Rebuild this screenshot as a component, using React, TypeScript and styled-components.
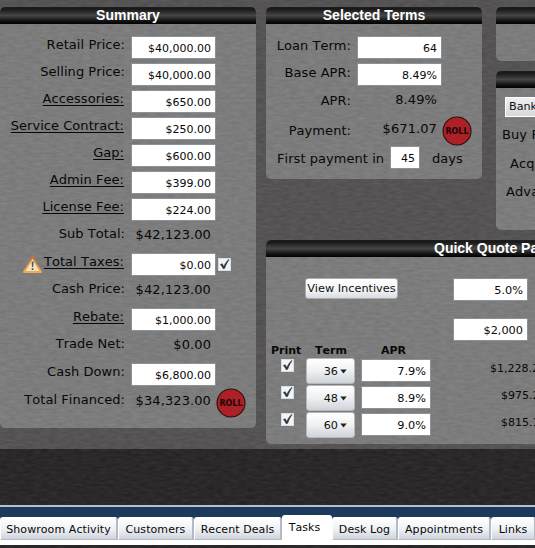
import React from 'react';
import styled, { createGlobalStyle, css } from 'styled-components';

const texture = `url("data:image/svg+xml,${encodeURIComponent(
  '<svg xmlns="http://www.w3.org/2000/svg" width="256" height="256"><filter id="g" x="0" y="0" width="100%" height="100%" color-interpolation-filters="sRGB"><feTurbulence type="fractalNoise" baseFrequency="0.12 0.4" numOctaves="2" seed="8" stitchTiles="stitch"/><feColorMatrix values="1.6 0 0 0 -0.3  1.6 0 0 0 -0.3  1.6 0 0 0 -0.3  0 0 0 0 0.05"/></filter><rect width="256" height="256" filter="url(#g)"/></svg>'
)}")`;

const GlobalStyle = createGlobalStyle`
  body { margin: 0; overflow: hidden; background: #2b2929; }
  * { box-sizing: border-box; }
`;

const Page = styled.div`
  width: 535px;
  height: 548px;
  overflow: hidden;
  display: flex;
  flex-direction: column;
  background: ${texture}, #262424;
  font-family: 'DejaVu Sans', Verdana, sans-serif;
  font-size: 13px;
  font-kerning: none;
  line-height: 16px;
  color: #080808;
  white-space: nowrap;
`;

const Workspace = styled.div`
  height: 449px;
  flex: none;
  padding-top: 7px;
  display: flex;
  gap: 10px;
  background: ${texture}, #545152;
`;

const RightSide = styled.div`
  display: flex;
  flex-direction: column;
  width: 420px;
  flex: none;
`;

const TopPanels = styled.div`
  display: flex;
  gap: 14px;
  height: 233px;
`;

const SideStack = styled.div`
  display: flex;
  flex-direction: column;
  gap: 10px;
`;

const PanelBox = styled.section<{ $w: number; $h: number }>`
  width: ${(p) => p.$w}px;
  height: ${(p) => p.$h}px;
  flex: none;
  border-radius: 5px;
  overflow: hidden;
  background: ${texture}, #7c7c7c;
`;

const PanelTitle = styled.h2`
  margin: 0;
  height: 17px;
  font: bold 14px/17px 'Liberation Sans', Arial, sans-serif;
  text-align: center;
  color: #fff;
  background: linear-gradient(#1d1d1d 0%, #181818 12%, #464646 50%, #151515 80%, #000 100%);
`;

const SummaryBody = styled.div`
  padding-top: 12px;
`;

const SummaryRow = styled.div<{ $h: number }>`
  display: grid;
  grid-template-columns: 126px 85px auto;
  column-gap: 5px;
  align-items: start;
  height: ${(p) => p.$h}px;
`;

const LabelCell = styled.div`
  display: flex;
  justify-content: flex-end;
  align-items: flex-start;
  gap: 2px;
  padding: 1px 1px 0 0;
`;

const Label = styled.span<{ $link?: boolean }>`
  letter-spacing: 0.05px;
  ${(p) =>
    p.$link &&
    css`
      text-decoration: underline;
      text-underline-offset: 2px;
      text-decoration-thickness: 1px;
      margin-right: 1px;
    `}
`;

const Field = styled.div<{ $w?: number; $size?: number }>`
  width: ${(p) => p.$w ?? 85}px;
  height: 23px;
  border: 1px solid #8a9298;
  background: #fff;
  padding: 4px 4px 0 0;
  font-size: ${(p) => p.$size ?? 11}px;
  line-height: 16px;
  text-align: right;
`;

const Value = styled.div`
  padding: 2px 5px 0 0;
  text-align: right;
  letter-spacing: 0.1px;
`;

const CheckBox = styled.span`
  display: block;
  width: 13px;
  height: 13px;
  border: 1px solid #d5dce2;
  background: #f2f5f7;
  svg { display: block; overflow: visible; }
`;

const TaxCheck = styled.div`
  padding: 5px 0 0;
  margin-left: -3px;
`;

const WarnSlot = styled.div`
  height: 16px;
  padding-top: 2px;
  svg { display: block; }
`;

const StampSvg = styled.svg`
  display: block;
  margin: -3px 0 0 -5px;
`;

const TermsBody = styled.div`
  padding: 12px 0 0 6px;
`;

const TermsRow = styled.div<{ $h: number }>`
  display: grid;
  grid-template-columns: 80px 85px auto;
  column-gap: 5px;
  align-items: start;
  height: ${(p) => p.$h}px;
`;

const TermsLabel = styled(LabelCell)<{ $top?: number }>`
  padding-top: ${(p) => p.$top ?? 2}px;
`;

const FirstPayment = styled.div`
  display: flex;
  align-items: flex-start;
  padding-left: 5px;
`;

const InlineText = styled.span<{ $w: number; $left?: number }>`
  width: ${(p) => p.$w}px;
  padding: 5px 0 0 ${(p) => p.$left ?? 0}px;
  letter-spacing: 0.05px;
`;

const BankBody = styled.div`
  padding: 9px 0 0 6px;
`;

const BankButton = styled.button`
  display: block;
  width: 90px;
  height: 20px;
  margin: 0 0 10px 3px;
  padding: 0 0 0 3px;
  border: 1px solid #fff;
  background: linear-gradient(#f0f0f2, #d6d8db);
  font: 11.2px/18px 'DejaVu Sans', sans-serif;
  text-align: left;
  color: #111;
`;

const BankLabel = styled.div<{ $left: number; $top: number }>`
  padding: ${(p) => p.$top}px 0 0 ${(p) => p.$left}px;
  letter-spacing: 0.1px;
`;

const QuoteTitle = styled(PanelTitle)`
  text-align: left;
  padding-left: 168px;
`;

const QuoteTop = styled.div`
  display: grid;
  grid-template-columns: 92px 75px;
  column-gap: 56px;
  row-gap: 17px;
  padding: 21px 0 0 39px;
`;

const Incentives = styled.button`
  width: 93px;
  height: 21px;
  padding: 0;
  border: 1px solid #a9adb2;
  border-radius: 3px;
  background: linear-gradient(#fff, #f4f5f6 55%, #d9dde1);
  font: 11.3px/18px 'DejaVu Sans', sans-serif;
  color: #111;
`;

const Blank = styled.span``;

const QuoteGrid = styled.div`
  display: grid;
  grid-template-columns: 40px 50px 70px 110px;
`;

const HeadRow = styled(QuoteGrid)`
  height: 15px;
  margin-top: 2px;
  font-size: 11px;
  font-weight: bold;
  line-height: 16px;
`;

const Head = styled.span<{ $pad: number }>`
  padding-left: ${(p) => p.$pad}px;
`;

const QuoteRow = styled(QuoteGrid)`
  height: 27px;
  align-items: start;
`;

const PrintCell = styled.div`
  padding: 1px 0 0 15px;
`;

const TermButton = styled.button`
  display: flex;
  align-items: center;
  justify-content: flex-end;
  gap: 2px;
  width: 49px;
  height: 26px;
  padding: 1px 7px 0 0;
  border: 1px solid #b4b8bd;
  border-radius: 3px;
  background: linear-gradient(#fff, #eef0f1 50%, #cfd4d9);
  font: 11.2px/16px 'DejaVu Sans', sans-serif;
  color: #111;
`;

const AprCell = styled.div`
  padding: 1px 0 0 5px;
`;

const Payment = styled.div`
  padding: 3px 0 0 64px;
  font-size: 11px;
`;

const PaymentText = styled.div<{ $w: number }>`
  width: ${(p) => p.$w}px;
  margin-left: ${(p) => 61 - p.$w}px;
`;

const TabBar = styled.nav`
  margin-top: 56px;
  height: 40px;
  flex: none;
  border-top: 2px solid #b5c0cb;
  border-bottom: 5px solid #fff;
  background: #1b3a5c;
  display: flex;
  align-items: flex-end;
`;

const Tab = styled.div<{ $w: number; $active?: boolean }>`
  width: ${(p) => p.$w}px;
  height: ${(p) => (p.$active ? 25 : 23)}px;
  flex: none;
  padding: ${(p) => (p.$active ? '4px 4px 0 0' : '4px 0 0')};
  border: 1px solid ${(p) => (p.$active ? '#fff' : '#b3bac2')};
  border-top-color: #fff;
  border-left-color: #fff;
  border-right-width: 2px;
  border-radius: 3px 3px 0 0;
  background: ${(p) => (p.$active ? '#fff' : 'linear-gradient(#fff, #f0f2f5 50%, #cfd5dc)')};
  text-align: center;
  font-size: 11px;
  line-height: 15px;
  letter-spacing: 0.08px;
`;

function Check() {
  return (
    <CheckBox>
      <svg width="11" height="11" viewBox="0 0 11 11">
        <path d="M1.2 5.4 L3.2 4.6 L4.8 7.2 C6 4.6 7.6 2 9.8 .2 L10.2 .8 C8.3 3.2 7 6 5.9 9.2 L4.2 10 C3.4 8.2 2.4 6.6 1.2 5.4Z" fill="#30353d" stroke="#30353d" strokeWidth=".3" />
      </svg>
    </CheckBox>
  );
}

function Warning() {
  return (
    <WarnSlot>
      <svg width="19" height="17" viewBox="0 0 19 17">
        <defs>
          <linearGradient id="warn" x1="0" y1="0" x2="0" y2="1">
            <stop offset="0" stopColor="#c9742c" />
            <stop offset="1" stopColor="#f5ab4b" />
          </linearGradient>
        </defs>
        <path d="M9.5 1 L18 16 H1Z" fill="#f3e2c8" stroke="url(#warn)" strokeWidth="1.8" strokeLinejoin="round" />
        <path d="M8.6 5.5 h2 l-.4 5.6 h-1.2Z M8.7 12.3 h1.8 v1.8 h-1.8Z" fill="#555" />
      </svg>
    </WarnSlot>
  );
}

function Stamp() {
  return (
    <StampSvg width="30" height="30" viewBox="0 0 30 30">
      <circle cx="15" cy="15" r="14" fill="#ad2025" stroke="#271011" strokeWidth="1.1" />
      <text x="15" y="18" textAnchor="middle" textLength="23" lengthAdjust="spacingAndGlyphs" fontFamily="DejaVu Sans" fontWeight="bold" fontSize="8" fill="#160708">
        ROLL
      </text>
    </StampSvg>
  );
}

type Item = { label: string; value: string; h: number; link?: boolean; field?: boolean; warn?: boolean; stamp?: boolean };

const summary: Item[] = [
  { label: 'Retail Price:', value: '$40,000.00', h: 27, field: true },
  { label: 'Selling Price:', value: '$40,000.00', h: 27, field: true },
  { label: 'Accessories:', value: '$650.00', h: 27, field: true, link: true },
  { label: 'Service Contract:', value: '$250.00', h: 27, field: true, link: true },
  { label: 'Gap:', value: '$600.00', h: 27, field: true, link: true },
  { label: 'Admin Fee:', value: '$399.00', h: 27, field: true, link: true },
  { label: 'License Fee:', value: '$224.00', h: 27, field: true, link: true },
  { label: 'Sub Total:', value: '$42,123.00', h: 28 },
  { label: 'Total Taxes:', value: '$0.00', h: 27, field: true, link: true, warn: true },
  { label: 'Cash Price:', value: '$42,123.00', h: 28 },
  { label: 'Rebate:', value: '$1,000.00', h: 27, field: true, link: true },
  { label: 'Trade Net:', value: '$0.00', h: 28 },
  { label: 'Cash Down:', value: '$6,800.00', h: 28, field: true },
  { label: 'Total Financed:', value: '$34,323.00', h: 27, stamp: true },
];

const quotes = [
  { term: '36', apr: '7.9%', payment: '$1,228.25', w: 61 },
  { term: '48', apr: '8.9%', payment: '$975.25', w: 50 },
  { term: '60', apr: '9.0%', payment: '$815.15', w: 50 },
];

const tabs = [
  { name: 'Showroom Activity', w: 118 },
  { name: 'Customers', w: 76 },
  { name: 'Recent Deals', w: 88 },
  { name: 'Tasks', w: 50, active: true },
  { name: 'Desk Log', w: 66 },
  { name: 'Appointments', w: 93 },
  { name: 'Links', w: 45 },
];

export default function App() {
  return (
    <>
      <GlobalStyle />
      <Page>
        <Workspace>
          <PanelBox $w={256} $h={421}>
            <PanelTitle>Summary</PanelTitle>
            <SummaryBody>
              {summary.map((r) => (
                <SummaryRow key={r.label} $h={r.h}>
                  <LabelCell>
                    {r.warn && <Warning />}
                    <Label $link={r.link}>{r.label}</Label>
                  </LabelCell>
                  {r.field ? <Field>{r.value}</Field> : <Value>{r.value}</Value>}
                  {r.warn && <TaxCheck><Check /></TaxCheck>}
                  {r.stamp && <Stamp />}
                </SummaryRow>
              ))}
            </SummaryBody>
          </PanelBox>
          <RightSide>
            <TopPanels>
              <PanelBox $w={216} $h={172}>
                <PanelTitle>Selected Terms</PanelTitle>
                <TermsBody>
                  <TermsRow $h={27}>
                    <TermsLabel><Label>Loan Term:</Label></TermsLabel>
                    <Field>64</Field>
                  </TermsRow>
                  <TermsRow $h={27}>
                    <TermsLabel><Label>Base APR:</Label></TermsLabel>
                    <Field>8.49%</Field>
                  </TermsRow>
                  <TermsRow $h={29}>
                    <TermsLabel $top={3}><Label>APR:</Label></TermsLabel>
                    <Value>8.49%</Value>
                  </TermsRow>
                  <TermsRow $h={27}>
                    <TermsLabel $top={4}><Label>Payment:</Label></TermsLabel>
                    <Value>$671.07</Value>
                    <Stamp />
                  </TermsRow>
                  <FirstPayment>
                    <InlineText $w={113}>First payment in</InlineText>
                    <Field $w={30}>45</Field>
                    <InlineText $w={50} $left={12}>days</InlineText>
                  </FirstPayment>
                </TermsBody>
              </PanelBox>
              <SideStack>
                <PanelBox $w={190} $h={54}><PanelTitle /></PanelBox>
                <PanelBox $w={190} $h={159}>
                  <PanelTitle />
                  <BankBody>
                    <BankButton>Bank</BankButton>
                    <BankLabel $left={0} $top={0}>Buy Rate:</BankLabel>
                    <BankLabel $left={8} $top={13}>Acq Fee:</BankLabel>
                    <BankLabel $left={4} $top={12}>Advance:</BankLabel>
                  </BankBody>
                </PanelBox>
              </SideStack>
            </TopPanels>
            <PanelBox $w={420} $h={204}>
              <QuoteTitle>Quick Quote Payments</QuoteTitle>
              <QuoteTop>
                <Incentives>View Incentives</Incentives>
                <Field $w={75} $size={11.3}>5.0%</Field>
                <Blank />
                <Field $w={75} $size={11.3}>$2,000</Field>
              </QuoteTop>
              <HeadRow>
                <Head $pad={5}>Print</Head>
                <Head $pad={9}>Term</Head>
                <Head $pad={25}>APR</Head>
              </HeadRow>
              {quotes.map((q) => (
                <QuoteRow key={q.term}>
                  <PrintCell><Check /></PrintCell>
                  <TermButton>
                    {q.term}
                    <svg width="7" height="5" viewBox="0 0 7 5"><path d="M.3 .5H6.7L3.5 4.5Z" fill="#222" /></svg>
                  </TermButton>
                  <AprCell><Field $w={70} $size={11.3}>{q.apr}</Field></AprCell>
                  <Payment><PaymentText $w={q.w}>{q.payment}</PaymentText></Payment>
                </QuoteRow>
              ))}
            </PanelBox>
          </RightSide>
        </Workspace>
        <TabBar>
          {tabs.map((t) => (
            <Tab key={t.name} $w={t.w} $active={t.active}>{t.name}</Tab>
          ))}
        </TabBar>
      </Page>
    </>
  );
}
